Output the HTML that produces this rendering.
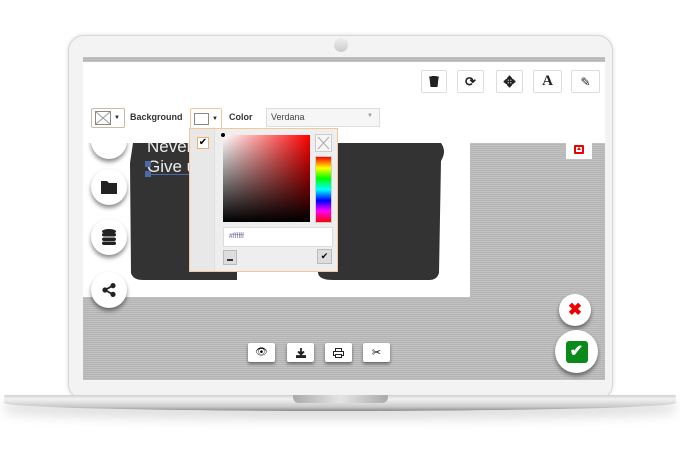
<!DOCTYPE html>
<html><head><style>
*{margin:0;padding:0;box-sizing:border-box}
body{width:680px;height:450px;background:#fff;position:relative;overflow:hidden;font-family:"Liberation Sans",sans-serif}
.a{position:absolute}
.lid{left:68px;top:35px;width:545px;height:365px;border-radius:16px;background:#f3f3f3;border:1px solid #d8d8d8;box-shadow:0 0 4px rgba(0,0,0,.15)}
.screen{left:83px;top:57px;width:522px;height:323px;background:#bdbdbd;background-image:repeating-linear-gradient(0deg,#c2c2c2 0 1px,#b4b4b4 1px 2px),repeating-linear-gradient(90deg,rgba(255,255,255,.1) 0 1px,transparent 1px 2px);overflow:hidden}
.btn{background:#fff;border:1px solid #ddd;border-radius:2px;display:flex;align-items:center;justify-content:center;font-size:13px;color:#222}
.bb{background:#fff;box-shadow:0 2px 3px rgba(0,0,0,.45);display:flex;align-items:center;justify-content:center;border-radius:2px}
.circ{background:#fff;border-radius:50%;box-shadow:0 3px 4px rgba(0,0,0,.45);display:flex;align-items:center;justify-content:center}
</style></head><body>
<div class="a lid"></div>
<div class="a" style="left:334px;top:38px;width:14px;height:14px;border-radius:50%;background:linear-gradient(#eee,#ccc)"></div>
<div class="a screen">
  <!-- canvas -->
  <div class="a" style="left:0;top:86px;width:387px;height:154px;background:#fff"></div>
  <svg class="a" style="left:0;top:86px" width="387" height="154">
    <path d="M50 0 L47 20 L48 130 Q50 137 60 137 L154 137 L154 0Z" fill="#333"/>
    <path d="M255 0 L358 0 Q364 8 358 18 L356 130 Q354 137 346 137 L250 137 Q236 137 235 130 L235 0Z" fill="#333"/>
  </svg>
  <div class="a" style="left:64px;top:80px;color:#eee;font-size:17px;line-height:20px">Never<br>Give u</div>
  <div class="a" style="left:62px;top:104px;width:6px;height:6px;background:#4a6aa8"></div>
  <div class="a" style="left:62px;top:114px;width:6px;height:6px;background:#4a6aa8"></div>
  <div class="a" style="left:68px;top:117px;width:50px;height:1px;background:#4a6aa8"></div>
  <!-- side circles -->
  <div class="a circ" style="left:8px;top:66px;width:36px;height:36px"></div>
  <div class="a circ" style="left:8px;top:112px;width:36px;height:36px"><svg width="16" height="14"><path d="M0 1h6l2 2h8v11H0z" fill="#222"/></svg></div>
  <div class="a circ" style="left:8px;top:162px;width:36px;height:36px"><svg width="14" height="16"><ellipse cx="7" cy="2.5" rx="7" ry="2.5" fill="#222"/><rect y="4" width="14" height="3.5" rx="2" fill="#222"/><rect y="8.5" width="14" height="3.5" rx="2" fill="#222"/><rect y="12.5" width="14" height="3.5" rx="2" fill="#222"/></svg></div>
  <div class="a circ" style="left:8px;top:215px;width:36px;height:36px"><svg width="14" height="14"><circle cx="3" cy="7" r="2.6" fill="#222"/><circle cx="11" cy="2.6" r="2.6" fill="#222"/><circle cx="11" cy="11.4" r="2.6" fill="#222"/><path d="M3 7L11 2.6M3 7L11 11.4" stroke="#222" stroke-width="1.8"/></svg></div>
  <div class="a" style="left:0;top:5px;width:522px;height:81px;background:#fff"></div>
  <!-- toolbar -->
  <div class="a btn" style="left:338px;top:13px;width:26px;height:23px"><svg width="10" height="11"><path d="M0 1h10M3 1V0h4v1M1 2h8l-1 9H2z" fill="#222" stroke="#222" stroke-width="1"/></svg></div>
  <div class="a btn" style="left:374px;top:13px;width:27px;height:23px;font-weight:bold">⟳</div>
  <div class="a btn" style="left:413px;top:13px;width:27px;height:23px;font-weight:bold;font-size:15px">✥</div>
  <div class="a btn" style="left:450px;top:13px;width:29px;height:23px;font-family:'Liberation Serif',serif;font-weight:bold;font-size:15px">A</div>
  <div class="a btn" style="left:488px;top:13px;width:29px;height:23px;font-size:12px">✎</div>
  <div class="a btn" style="left:8px;top:51px;width:34px;height:20px;border-color:#c9b9a8;justify-content:flex-start;padding-left:3px"><svg width="16" height="14"><rect x=".5" y=".5" width="15" height="13" fill="#fff" stroke="#888"/><path d="M1 1L15 13M15 1L1 13" stroke="#999"/></svg><span style="font-size:6px;margin-left:3px">▼</span></div>
  <div class="a" style="left:47px;top:55px;font-size:9px;font-weight:bold;color:#333">Background</div>
  <div class="a btn" style="left:107px;top:51px;width:32px;height:21px;border-color:#f0c89a;justify-content:flex-start;padding-left:3px"><div style="width:15px;height:12px;border:1px solid #888"></div><span style="font-size:6px;margin-left:3px">▼</span></div>
  <div class="a" style="left:146px;top:55px;font-size:9px;font-weight:bold;color:#333">Color</div>
  <div class="a" style="left:183px;top:51px;width:114px;height:19px;border:1px solid #ddd;background:#f6f6f6;font-size:9px;color:#444;padding:3px 4px">Verdana<span style="position:absolute;right:6px;top:4px;font-size:6px;color:#999">▼</span></div>
  <!-- popup -->
  <div class="a" style="left:106px;top:71px;width:149px;height:144px;background:#eee;border:1px solid #f0c89a">
    <div class="a" style="left:0;top:0;width:25px;height:142px;background:#e8e8e8;border-right:1px solid #ddd"></div>
    <div class="a" style="left:7px;top:8px;width:12px;height:12px;background:#fff;border:1px solid #f0b070;font-size:10px;line-height:10px;text-align:center">✔</div>
    <div class="a" style="left:33px;top:6px;width:87px;height:87px;background:linear-gradient(to top,#000,transparent),linear-gradient(to right,#fff,#f00)"></div>
    <div class="a" style="left:31px;top:4px;width:4px;height:4px;border-radius:50%;background:#000"></div>
    <div class="a" style="left:125px;top:5px;width:17px;height:18px;background:#f6f6f6;border:1px solid #ccc"><svg width="15" height="16"><path d="M2 2L13 14M13 2L2 14" stroke="#aaa"/></svg></div>
    <div class="a" style="left:125px;top:27px;width:17px;height:67px;border:1px solid #ccc;background:linear-gradient(#f00,#ff0 17%,#0f0 33%,#0ff 50%,#00f 67%,#f0f 83%,#f00)"></div>
    <div class="a" style="left:33px;top:98px;width:110px;height:20px;background:#fff;border:1px solid #ddd;font-size:7px;color:#669;padding:5px 5px">#ffffff</div>
    <div class="a" style="left:33px;top:121px;width:14px;height:15px;background:#ddd;border:1px solid #bbb"><div style="margin:8px 3px 0;height:2px;background:#333"></div></div>
    <div class="a" style="left:127px;top:120px;width:15px;height:15px;background:#ddd;border:1px solid #bbb;font-size:9px;text-align:center;line-height:13px">✔</div>
  </div>
  <!-- red icon -->
  <div class="a" style="left:483px;top:83px;width:26px;height:19px;background:#fff"><div style="margin:5px 8px;width:10px;height:9px;border:2px solid #e00;border-radius:1px;position:relative"><div style="position:absolute;left:1px;top:0;width:0;height:0;border-left:2px solid transparent;border-right:2px solid transparent;border-bottom:3px solid #e00"></div></div></div>
  <!-- bottom buttons -->
  <div class="a bb" style="left:165px;top:286px;width:27px;height:19px;font-size:10px">👁</div>
  <div class="a bb" style="left:204px;top:286px;width:27px;height:19px"><svg width="10" height="10"><path d="M5 0v6M2 3.5L5 6.5 8 3.5M0 8h10v2H0z" stroke="#222" stroke-width="1.8" fill="#222"/></svg></div>
  <div class="a bb" style="left:242px;top:286px;width:27px;height:19px"><svg width="11" height="10"><rect x="2.5" y=".5" width="6" height="3" fill="none" stroke="#222"/><rect x=".5" y="3.5" width="10" height="4" fill="none" stroke="#222"/><rect x="2.5" y="6.5" width="6" height="3" fill="#fff" stroke="#222"/></svg></div>
  <div class="a bb" style="left:280px;top:286px;width:27px;height:19px;font-size:11px">✂</div>
</div>
<div class="a circ" style="left:559px;top:294px;width:32px;height:32px;color:#e00;font-size:17px;font-weight:bold">✖</div>
<div class="a circ" style="left:555px;top:330px;width:43px;height:43px"><div style="width:22px;height:22px;background:#0a8a1a;border-radius:3px;color:#fff;font-size:16px;text-align:center;line-height:22px;font-weight:bold">✔</div></div>
<!-- base -->
<div class="a" style="left:4px;top:395px;width:672px;height:16px;border-radius:2px 2px 50% 50%/2px 2px 8px 8px;background:linear-gradient(#d0d0d0,#f2f2f2 25%,#c8c8c8 75%,#8a8a8a);box-shadow:0 8px 12px rgba(0,0,0,.14)"></div>
<div class="a" style="left:293px;top:395px;width:95px;height:8px;border-radius:0 0 6px 6px;background:linear-gradient(90deg,#aaa,#e4e4e4,#aaa)"></div>
</body></html>
